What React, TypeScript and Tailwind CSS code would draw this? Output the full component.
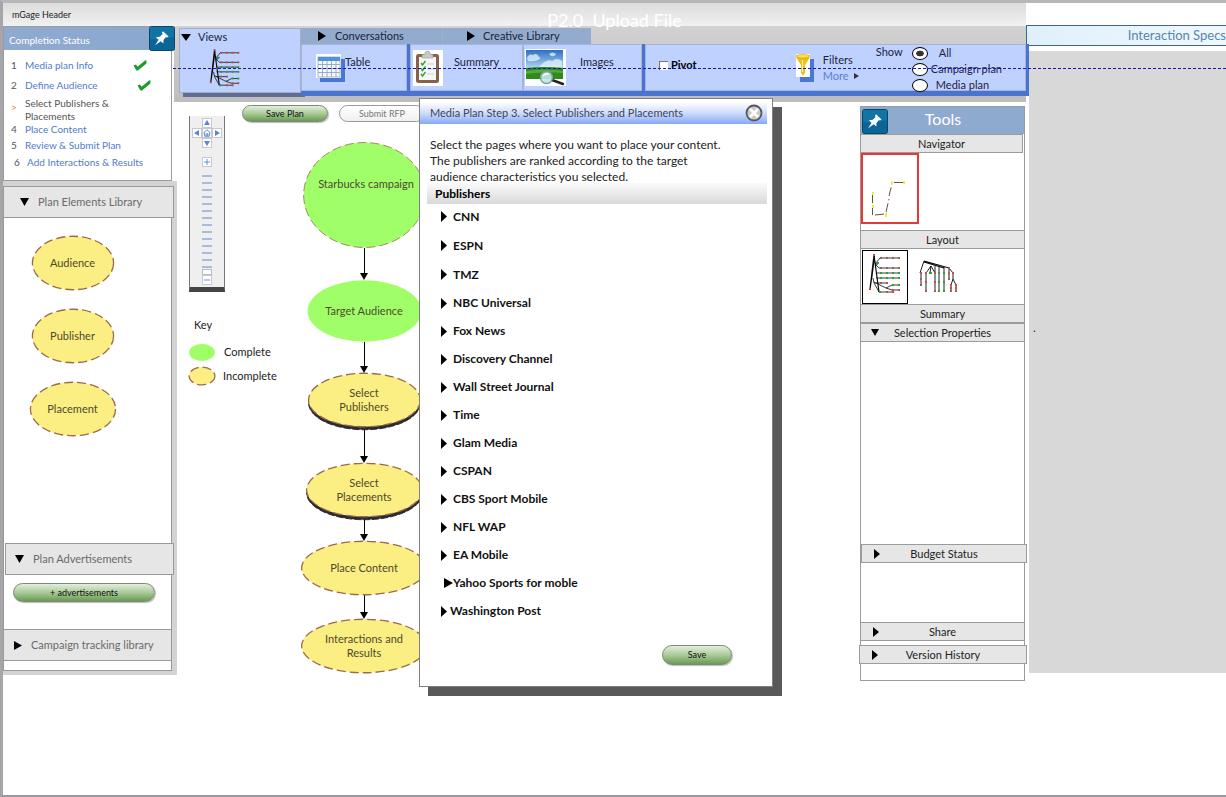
import type { ReactNode } from "react";

const publishers = [
  "CNN",
  "ESPN",
  "TMZ",
  "NBC Universal",
  "Fox News",
  "Discovery Channel",
  "Wall Street Journal",
  "Time",
  "Glam Media",
  "CSPAN",
  "CBS Sport Mobile",
  "NFL WAP",
  "EA Mobile",
  "Yahoo Sports for moble",
  "Washington Post",
];

const steps = [
  { mark: "1", label: "Media plan Info", state: "done" },
  { mark: "2", label: "Define Audience", state: "done" },
  { mark: ">", label: "Select Publishers & Placements", state: "current" },
  { mark: "4", label: "Place Content", state: "open" },
  { mark: "5", label: "Review & Submit Plan", state: "open" },
  { mark: "6", label: "Add Interactions & Results", state: "open" },
];

function Right({ className = "h-3 w-2" }: { className?: string }) {
  return (
    <svg viewBox="0 0 8 12" preserveAspectRatio="none" className={`${className} shrink-0`} aria-hidden="true">
      <path d="M0 0L8 6L0 12Z" fill="#000" />
    </svg>
  );
}

function Down({ className = "h-2 w-2" }: { className?: string }) {
  return (
    <svg viewBox="0 0 10 8" preserveAspectRatio="none" className={`${className} shrink-0`} aria-hidden="true">
      <path d="M0 0H10L5 8Z" fill="#000" />
    </svg>
  );
}

function Pin() {
  return (
    <svg viewBox="0 0 26 25" className="h-[25px] w-[26px]" aria-hidden="true">
      <rect x="0.5" y="0.5" width="25" height="24" rx="2" fill="#0b6596" stroke="#08466b" />
      <path d="M1 1H25V11Q12 15 1 13Z" fill="#1273a5" />
      <path d="M14 5.2L19.6 10.6L17.9 11.5L16.9 11.1L14.5 14.1L14.4 17.6L11.7 15.3L6.2 19.2L9.5 13.7L6.8 11.2L10.7 10.8L13.5 8.3L13 6.7Z" fill="#fff" />
    </svg>
  );
}

function Check() {
  return (
    <svg viewBox="0 0 14 11" className="h-[11px] w-[14px] shrink-0" aria-hidden="true">
      <path d="M0.5 5.5L3 4.5L4.6 6.8L12 0.5L13.5 0.3L13.4 3.5L5 10.5L3.4 10.6Z" fill="#1f9a2b" />
    </svg>
  );
}

function TreeAcross({ className }: { className: string }) {
  const rows = [
    [4, 12, 31],
    [14, 11, 31],
    [19, 8, 31],
    [24, 8, 31],
    [29, 7, 20],
  ];
  return (
    <svg viewBox="0 0 34 42" className={className} aria-hidden="true">
      <g stroke="#0a0a0a" strokeWidth="0.8" fill="none">
        <path d="M6 1L2 35M6.500 2L4 22L2 35M6 1L11 38" strokeWidth="1.200" />
        <path d="M7 10L12 4M7 10L11 14M7 10L11 9L7 12M5 24L6 29L11 38M6 28L18 34L24 31M18 34L24 36" />
        {rows.map(([y, a, b]) => (
          <path key={y} d={`M${a} ${y}H${b}`} />
        ))}
        <path d="M24 31H31M24 36H31M11 38H25" />
      </g>
      {rows.map(([y, , b], i) => (
        <g key={y} fill={i === 2 || i === 3 ? "#21a53a" : "#b0564c"}>
          <rect x="12" y={y - 1} width="2" height="2" />
          <rect x="18" y={y - 1} width="2" height="2" />
          {b > 24 && <rect x="24" y={y - 1} width="2" height="2" />}
          {b > 24 && <rect x="30" y={y - 1} width="2" height="2" />}
        </g>
      ))}
      <rect x="8" y="8" width="3" height="2" fill="#2ca04a" />
      <path d="M5 0h2v2h-2zM1 34h2v2h-2zM24 35h2v2h-2zM30 35h2v2h-2zM18 37h2v2h-2zM24 37h2v2h-2z" fill="#b0564c" />
      <path d="M24 30h2v2h-2zM30 30h2v2h-2zM11 37h2v2h-2z" fill="#21a53a" />
    </svg>
  );
}

function TreeDown() {
  const columns = [
    [3, 13, 25],
    [8, 13, 31],
    [17, 13, 31],
    [21, 13, 31],
    [26, 13, 31],
    [31, 8, 19],
    [33, 25, 31],
    [38, 25, 31],
  ];
  return (
    <svg viewBox="0 0 40 33" className="h-[33px] w-[40px]" aria-hidden="true">
      <g stroke="#0a0a0a" strokeWidth="0.9" fill="none">
        <path d="M6 1L31 8M6 2L26 8" strokeWidth="1.200" />
        <path d="M6 1L2 13M13 6L8 13M13 6L12 13M13 6L17 13M17 6V13M21 7V13M26 7V13M31 8L35 13V19L33 25M35 19L38 25" />
        {columns.map(([x, a, b]) => (
          <path key={x} d={`M${x} ${a}V${b}`} />
        ))}
      </g>
      {columns.map(([x, a, b], i) => (
        <g key={x} fill={i > 2 && i < 5 ? "#21a53a" : "#b0564c"}>
          <rect x={x - 1} y={a - 1} width="2" height="2" />
          <rect x={x - 1} y={(a + b) / 2 - 1} width="2" height="2" />
          <rect x={x - 1} y={b - 1} width="2" height="2" />
        </g>
      ))}
      <rect x="11" y="12" width="3" height="2" fill="#21a53a" />
      <rect x="34" y="12" width="2" height="2" fill="#b0564c" />
    </svg>
  );
}

function TableIcon() {
  return (
    <svg viewBox="0 0 29 28" className="h-[28px] w-[29px]" aria-hidden="true">
      <rect x="4" y="5" width="25" height="23" fill="#4a77d4" />
      <rect width="25" height="24" fill="#fff" />
      <rect x="2" y="3" width="22" height="20" fill="#f4f8fd" stroke="#8299b8" strokeWidth="0.7" />
      <rect x="2" y="3" width="22" height="4" fill="#4f93dc" />
      <path d="M2 10.5H24M2 14.5H24M2 18.5H24M6.5 7V23M11 7V23M15.5 7V23M20 7V23" stroke="#93a7c0" strokeWidth="0.9" />
    </svg>
  );
}

function ClipboardIcon() {
  return (
    <svg viewBox="0 0 30 36" className="h-[36px] w-[30px]" aria-hidden="true">
      <rect width="30" height="36" fill="#fff" />
      <rect x="3" y="4" width="23" height="29" rx="2.5" fill="#85634a" />
      <rect x="6" y="7" width="17" height="23" fill="#f6f6f4" />
      <path d="M9 8V5L12 4Q12 1 14.5 1Q17 1 17 4L20 5V8Z" fill="#c9c9cb" stroke="#9a9a9c" strokeWidth="0.6" />
      <path d="M14 14H21M14 19H21M14 24H21" stroke="#cfcfcf" />
      <path d="M8 13L9.5 15L12.5 11M8 18.500L9.500 20.500L12.500 16.500M8 24L9.500 26L12.500 22" stroke="#2ea52e" strokeWidth="1.4" fill="none" />
    </svg>
  );
}

function PictureIcon() {
  return (
    <svg viewBox="0 0 41 37" className="h-[37px] w-[41px]" aria-hidden="true">
      <defs>
        <linearGradient id="sky" x1="0" y1="0" x2="0" y2="1">
          <stop offset="0" stopColor="#2c6fc4" />
          <stop offset="1" stopColor="#b5dcf2" />
        </linearGradient>
      </defs>
      <rect width="41" height="37" fill="#fff" />
      <rect x="1" y="1" width="37" height="19" fill="url(#sky)" />
      <path d="M2 9Q4 4 8 6Q12 3 14 8Q17 9 13 11Q8 13 3 12ZM24 5Q28 2 31 5Q30 8 26 7ZM18 14Q23 10 27 12Q32 8 37 12V18H14Z" fill="#e6f3fb" opacity="0.75" />
      <path d="M1 19Q18 17 38 19V30H1Z" fill="#2f8a1f" />
      <path d="M1 22Q20 19 38 22V24Q20 22 1 25Z" fill="#57ab34" />
      <path d="M27 31L38 35" stroke="#222" strokeWidth="2.4" strokeLinecap="round" />
      <circle cx="21.500" cy="28.500" r="6" fill="#c3e6ea" fillOpacity="0.9" stroke="#7d9aa0" strokeWidth="1.400" />
      <path d="M18 27Q20 24 24 25" stroke="#fff" strokeWidth="1.5" fill="none" />
    </svg>
  );
}

function FunnelIcon() {
  return (
    <svg viewBox="0 0 18 28" className="h-[28px] w-[18px]" aria-hidden="true">
      <rect x="4" y="5" width="14" height="23" fill="#4a77d4" />
      <rect width="14" height="23" fill="#fff" />
      <path d="M0.500 1H13.500V4L9 11V19L7 21.500L5 19V11L0.500 4Z" fill="#f0bd12" />
      <ellipse cx="7" cy="2.200" rx="6.500" ry="1.800" fill="#ffe04a" stroke="#c29208" strokeWidth="0.5" />
      <path d="M6.500 6V18" stroke="#fff2a0" strokeWidth="1.2" />
    </svg>
  );
}

function Oval({
  size,
  complete = false,
  dashed = true,
  raised = false,
  lift = "",
  children,
}: {
  size: string;
  complete?: boolean;
  dashed?: boolean;
  raised?: boolean;
  lift?: string;
  children?: ReactNode;
}) {
  return (
    <div className={`relative flex shrink-0 items-center justify-center ${size}`}>
      <svg className="absolute inset-0 h-full w-full overflow-visible" aria-hidden="true">
        {raised && (
          <ellipse cx="50%" cy="50%" rx="49.5%" ry="49.5%" fill="#2c2a30" stroke="#2c2a30" strokeDasharray="7 2" className="translate-y-[3px]" />
        )}
        <ellipse
          cx="50%"
          cy="50%"
          rx="49.5%"
          ry="49.500%"
          fill={complete ? "#a0ff68" : "#fbee82"}
          stroke={dashed ? "#9b6a4c" : "none"}
          strokeWidth={complete ? 0.8 : 1.3}
          strokeDasharray="9 4"
        />
      </svg>
      <span className={`relative text-center text-[11px] leading-[14px] whitespace-pre-line text-[#4d4a30] ${lift}`}>{children}</span>
    </div>
  );
}

function Arrow({ size }: { size: string }) {
  return (
    <div className={`flex w-2 shrink-0 flex-col items-center ${size}`}>
      <div className="w-px flex-1 bg-black" />
      <Down className="h-[7px] w-2" />
    </div>
  );
}

function ToolBar({ children, arrow, className = "" }: { children: ReactNode; arrow?: "right" | "down"; className?: string }) {
  return (
    <button
      type="button"
      className={`grid h-[19px] shrink-0 grid-cols-[24px_1fr_24px] items-center border border-[#9b9b9b] bg-[#e6e6e6] text-[11px] leading-[16px] text-[#222] ${className}`}
    >
      <span className="flex justify-end pr-[6px]">
        {arrow === "right" && <Right className="h-[10px] w-[6px]" />}
        {arrow === "down" && <Down className="h-[7px] w-[8px]" />}
      </span>
      <span className="text-center">{children}</span>
    </button>
  );
}

const pill =
  "flex items-center justify-center rounded-full border border-[#7d8a78] bg-linear-to-b from-[#e3efdc] via-[#a9cb98] to-[#6b9b52] text-[9px] leading-3 text-[#111] shadow-[1px_1px_1px_#bbb]";

const padKey = "flex h-[10px] w-[10px] items-center justify-center border border-[#c4c8d0] bg-white text-[#5b84d6]";

function PadArrow({ d }: { d: string }) {
  return (
    <svg viewBox="0 0 6 6" className="h-[6px] w-[6px] shrink-0" aria-hidden="true">
      <path d={d} fill="currentColor" />
    </svg>
  );
}

function CompletionStatus() {
  return (
    <section className="relative z-20 mr-[5px] h-[155px] border border-[#9c9c9c] bg-white">
      <header className="-mr-[4px] flex h-[23px] items-center justify-between bg-linear-to-r from-[#8faacf] to-[#8aa8cf]">
        <h2 className="pt-1 pl-[5px] text-[10px] text-white">Completion Status</h2>
        <button type="button" aria-label="Pin completion status">
          <Pin />
        </button>
      </header>
      <ol className="flex flex-col pt-[9px] text-[10px] leading-[13px]">
        {steps.map((step, i) => (
          <li key={step.label} className={`flex ${["h-5", "h-[18px]", "h-[26px]", "h-[16px]", "h-[17px]", "h-4"][i]} items-center`}>
            <span className={`w-[21px] shrink-0 self-start ${i === 5 ? "pl-[10px]" : "pl-[7px]"} ${step.state === "current" ? "pt-1 text-[#ef7a35]" : "text-[#555]"}`}>
              {step.mark}
            </span>
            {step.state === "current" ? (
              <span className="w-[100px] text-[#555]">{step.label}</span>
            ) : (
              <a href="#step" className={`self-start whitespace-nowrap text-[#4f7bcb] ${i === 5 ? "pl-[2px]" : ""}`}>
                {step.label}
              </a>
            )}
            {step.state === "done" && (
              <span className={`ml-auto self-start pt-px ${i === 0 ? "pr-6" : "pr-5"}`}>
                <Check />
              </span>
            )}
          </li>
        ))}
      </ol>
    </section>
  );
}

function LibraryHeading({ children, open = false, className = "" }: { children: ReactNode; open?: boolean; className?: string }) {
  return (
    <button
      type="button"
      className={`flex h-8 shrink-0 items-center gap-[9px] border border-[#999] bg-[#e6e6e6] text-[11px] text-[#6a6a6a] ${className}`}
    >
      {open ? <Down className="h-2 w-[9px]" /> : <Right className="h-[9px] w-2" />}
      {children}
    </button>
  );
}

function Library() {
  return (
    <section className="bg-[#d3d3d3] pt-[5px] pr-[5px] pb-[4px]">
      <div className="flex h-[485px] flex-col border border-[#999] bg-white">
        <LibraryHeading open className="-mt-px -mr-[3px] -ml-px pl-4">
          Plan Elements Library
        </LibraryHeading>
        <div className="flex flex-1 flex-col items-center gap-[19px] pt-[18px] pr-[30px]">
          <Oval size="h-[54px] w-[82px]">Audience</Oval>
          <Oval size="h-[54px] w-[82px]">Publisher</Oval>
          <Oval size="h-[54px] w-[86px]">Placement</Oval>
        </div>
        <LibraryHeading open className="-mr-[3px] ml-px pl-[9px]">
          Plan Advertisements
        </LibraryHeading>
        <div className="h-[54px] shrink-0 pt-2 pr-4 pl-[9px]">
          <button type="button" className={`${pill} h-[19px] w-full`}>
            + advertisements
          </button>
        </div>
        <LibraryHeading className="-mx-px pl-[10px]">Campaign tracking library</LibraryHeading>
        <div className="h-[9px] shrink-0" />
      </div>
    </section>
  );
}

function Toolbar() {
  const radios = ["All", "Campaign plan", "Media plan"];
  return (
    <nav className="-ml-[3px] flex h-[76px] items-start bg-linear-to-b from-[#d2d2d2] to-[#bdbdbd] pt-[2px] pl-[5px] text-[11px] text-[#1c2340]">
      <section className="h-[65px] w-[122px] shrink-0 border border-[#a5aec2] bg-[#bfd1ff] shadow-[4px_4px_0_#5e6c96]">
        <button type="button" className="flex h-4 items-center gap-[7px] pl-px">
          <Down className="h-[7px] w-[10px]" />
          Views
        </button>
        <div className="pt-[4px] pl-7">
          <TreeAcross className="h-[40px] w-[34px]" />
        </div>
      </section>
      <div className="relative -mr-[3px] flex-1">
        <div className="flex h-4 w-[290px] bg-[#93accd]">
          <button type="button" className="flex flex-1 items-center gap-[9px] border-r border-[#9db2cf] pl-[17px]">
            <Right className="h-[10px] w-2" />
            Conversations
          </button>
          <button type="button" className="flex flex-1 items-center gap-[8px] pl-[24px]">
            <Right className="h-[10px] w-2" />
            Creative Library
          </button>
        </div>
        <div className="flex h-[52px] bg-[#4a74cf] pr-[3px] pb-[5px] whitespace-nowrap">
          <button type="button" className="mr-[3px] flex w-[106px] items-center border border-[#a5b4d8] bg-[#bfd1ff] pl-[14px]">
            <TableIcon />
            <span className="pb-[10px]">Table</span>
          </button>
          <button type="button" className="flex w-[113px] items-center gap-[11px] border border-[#a5b4d8] bg-[#bfd1ff] pl-[2px]">
            <ClipboardIcon />
            <span className="pb-[10px]">Summary</span>
          </button>
          <button type="button" className="mr-[3px] flex w-[119px] items-center gap-[14px] border border-[#a5b4d8] bg-[#bfd1ff] pl-px">
            <PictureIcon />
            <span className="pb-[10px]">Images</span>
          </button>
          <div className="flex flex-1 items-center justify-between border border-[#a5b4d8] bg-[#bfd1ff] pr-[23px] pl-[13px]">
            <label className="flex items-center gap-[3px] pb-1 font-bold text-black">
              <input type="checkbox" className="h-[9px] w-[9px] appearance-none border-t border-l border-[#777] bg-white checked:bg-[#335]" />
              Pivot
            </label>
            <div className="flex items-center">
              <div className="flex items-center gap-[9px]">
                <FunnelIcon />
                <div className="flex w-[53px] flex-col leading-[16px]">
                  <span>Filters</span>
                  <a href="#filters" className="flex items-center gap-[5px] text-[#5a80d4]">
                    More
                    <svg viewBox="0 0 5 6" className="h-[6px] w-[5px]" aria-hidden="true">
                      <path d="M0 0L5 3L0 6Z" fill="#334" />
                    </svg>
                  </a>
                </div>
              </div>
              <fieldset className="flex items-start pt-[3px]">
                <legend className="float-left w-[36px] leading-[14px]">Show</legend>
                <div className="flex flex-col">
                  {radios.map((name, i) => (
                    <label key={name} className="flex h-4 items-center">
                      <input
                        type="radio"
                        name="show"
                        defaultChecked={i === 0}
                        className="h-[13px] w-4 appearance-none rounded-[50%] border border-black bg-white checked:bg-radial checked:from-[#333] checked:from-35% checked:to-white checked:to-40%"
                      />
                      <span className={["pl-[11px]", "pl-[3px]", "pl-[8px]"][i]}>{name}</span>
                    </label>
                  ))}
                </div>
              </fieldset>
            </div>
          </div>
        </div>
      </div>
    </nav>
  );
}

function ZoomControl() {
  return (
    <div className="flex w-[36px] flex-col items-center border-x border-b-[5px] border-x-[#777] border-b-[#444] bg-[#efefef] pb-[2px]">
      <div className="grid grid-cols-3 pt-[2px]">
        <span />
        <button type="button" aria-label="Pan up" className={padKey}>
          <PadArrow d="M0 5L3 0L6 5Z" />
        </button>
        <span />
        <button type="button" aria-label="Pan left" className={padKey}>
          <PadArrow d="M5 0L0 3L5 6Z" />
        </button>
        <button type="button" aria-label="Reset view" className={padKey}>
          <svg viewBox="0 0 10 10" className="h-2 w-2 shrink-0" aria-hidden="true">
            <path d="M0.500 5L5 1L9.500 5M2 4.500V9H8V4.500M4 9V6H6V9" fill="none" stroke="currentColor" strokeWidth="1.200" />
          </svg>
        </button>
        <button type="button" aria-label="Pan right" className={padKey}>
          <PadArrow d="M1 0L6 3L1 6Z" />
        </button>
        <span />
        <button type="button" aria-label="Pan down" className={padKey}>
          <PadArrow d="M0 1L3 6L6 1Z" />
        </button>
      </div>
      <button type="button" aria-label="Zoom in" className={`${padKey} mt-[9px]`}>
        <svg viewBox="0 0 8 8" className="h-[6px] w-[6px]" aria-hidden="true">
          <path d="M4 0V8M0 4H8" stroke="currentColor" strokeWidth="1.200" />
        </svg>
      </button>
      <input
        type="range"
        aria-label="Zoom level"
        defaultValue={0}
        className="mt-[3px] h-[105px] w-[10px] appearance-none bg-[repeating-linear-gradient(to_bottom,transparent_0px,transparent_5px,#a9bcdc_5px,#a9bcdc_7px)] [direction:rtl] [writing-mode:vertical-lr] [&::-webkit-slider-thumb]:h-[6px] [&::-webkit-slider-thumb]:w-[10px] [&::-webkit-slider-thumb]:appearance-none [&::-webkit-slider-thumb]:border [&::-webkit-slider-thumb]:border-[#b9bdc6] [&::-webkit-slider-thumb]:bg-white"
      />
      <button type="button" aria-label="Zoom out" className={padKey}>
        <svg viewBox="0 0 8 8" className="h-[6px] w-[6px]" aria-hidden="true">
          <path d="M0 4H8" stroke="currentColor" strokeWidth="1.200" />
        </svg>
      </button>
    </div>
  );
}

function Canvas() {
  return (
    <div className="relative flex flex-1 items-start">
      <aside className="w-[112px] shrink-0 pt-[14px] pl-[12px] text-[11px] text-[#222]">
        <ZoomControl />
        <h3 className="pt-[24px] pb-[9px] pl-[5px] leading-[18px]">Key</h3>
        <ul className="flex flex-col gap-[6px] leading-[18px]">
          <li className="flex items-center gap-[9px]">
            <Oval complete dashed={false} size="h-[17px] w-[26px]" />
            Complete
          </li>
          <li className="flex items-center gap-[8px]">
            <Oval size="h-[18px] w-[26px]" />
            Incomplete
          </li>
        </ul>
      </aside>
      <main className="w-[270px] shrink-0 pt-[3px]">
        <div className="-ml-[47px] flex gap-[11px]">
          <button type="button" className={`${pill} h-[17px] w-[86px]`}>
            Save Plan
          </button>
          <button
            type="button"
            className="h-[17px] w-[86px] rounded-full border border-[#999] bg-linear-to-b from-white to-[#f0f0f0] text-[9px] leading-3 text-[#777]"
          >
            Submit RFP
          </button>
        </div>
        <div className="flex w-[150px] flex-col items-center pt-[20px]">
          <Oval complete size="h-[106px] w-[123px]" lift="pb-[22px] pl-[4px]">Starbucks campaign</Oval>
          <Arrow size="h-[32px]" />
          <Oval complete dashed={false} size="h-[62px] w-[115px]">Target Audience</Oval>
          <Arrow size="h-[31px]" />
          <Oval raised size="h-[54px] w-[113px]">{"Select\nPublishers"}</Oval>
          <Arrow size="h-[36px]" />
          <Oval raised size="h-[54px] w-[117px]">{"Select\nPlacements"}</Oval>
          <Arrow size="h-[24px]" />
          <Oval size="h-[54px] w-[126px]">Place Content</Oval>
          <Arrow size="h-[24px]" />
          <Oval size="h-[54px] w-[126px]">{"Interactions and\nResults"}</Oval>
        </div>
      </main>
      <PublisherDialog />
    </div>
  );
}

function PublisherDialog() {
  return (
    <div
      role="dialog"
      aria-labelledby="dialog-title"
      className="absolute -top-[4px] left-[242px] z-30 w-[354px] border border-[#808080] bg-white pt-[3px] pr-[5px] pb-[21px] shadow-[9px_9px_0_#595959]"
    >
      <header className="flex h-[22px] items-center justify-between bg-linear-to-b from-white via-[#cfdcfb] to-[#86a9f4] pr-1 pl-[10px]">
        <h2 id="dialog-title" className="text-[11px] text-[#3c4660]">
          Media Plan Step 3. Select Publishers and Placements
        </h2>
        <button type="button" aria-label="Close">
          <svg viewBox="0 0 18 18" className="h-[18px] w-[18px]" aria-hidden="true">
            <circle cx="9" cy="9" r="7.500" fill="#c9c9c9" stroke="#56585c" strokeWidth="1.800" />
            <path d="M5 5L13 13M13 5L5 13" stroke="#fff" strokeWidth="2.600" />
          </svg>
        </button>
      </header>
      <p className="pt-[13px] pl-[10px] text-[12px] leading-[16px] whitespace-pre-line text-[#222]">
        {"Select the pages where you want to place your content.\nThe publishers are ranked according to the target\naudience characteristics you selected."}
      </p>
      <h3 className="-mt-[2px] ml-[7px] flex h-[21px] items-center bg-linear-to-b from-[#fbfbfb] to-[#d9d9d9] pl-2 text-[12px] font-bold text-black">Publishers</h3>
      <ul className="-mt-[2px] pl-[21px] text-[12px] font-bold text-[#111]">
        {publishers.map((name, i) => (
          <li key={name} className="flex h-7 items-center nth-[-n+3]:h-[29px]">
            <button type="button" className={`flex items-center ${i === 13 ? "pl-[3px]" : i === 14 ? "gap-[3px]" : "gap-[6px]"}`}>
              <Right className={i === 13 ? "h-[10px] w-[9px]" : "h-[11px] w-[6px]"} />
              {name}
            </button>
          </li>
        ))}
      </ul>
      <div className="flex justify-end pt-[20px] pr-[35px]">
        <button type="button" className={`${pill} h-[20px] w-[70px]`}>
          Save
        </button>
      </div>
    </div>
  );
}

function Tools() {
  return (
    <section className="mt-[4px] mr-px flex h-[575px] w-[165px] shrink-0 flex-col border border-[#9b9b9b] bg-white">
      <header className="grid h-[27px] shrink-0 grid-cols-[26px_1fr_26px] items-center bg-[#8faacf] pl-px">
        <button type="button" aria-label="Pin tools">
          <Pin />
        </button>
        <h2 className="pb-1 text-center text-[16px] leading-6 text-white">Tools</h2>
      </header>
      <ToolBar className="-ml-px mr-[1px]">Navigator</ToolBar>
      <div className="h-[77px] shrink-0">
        <svg viewBox="0 0 58 71" className="h-[71px] w-[58px]" aria-hidden="true">
          <rect x="1" y="1" width="56" height="69" fill="#fff" stroke="#e53935" strokeWidth="2" />
          <path d="M11.500 41V62M14 62L24 61M25 59L28 46M28 43L31 31M33 29.500H42" stroke="#6b5040" fill="none" strokeDasharray="9 3" />
          <path d="M11 39h2v3h-2zM11 52h2v3h-2zM24 60h2v4h-2zM30 28h2v3h-2zM42 28h2v3h-2z" fill="#f6e74a" />
        </svg>
      </div>
      <ToolBar className="-mx-px">Layout</ToolBar>
      <div className="flex h-[55px] shrink-0 items-center gap-[10px] pl-px">
        <button type="button" aria-label="Horizontal tree" className="flex h-[54px] w-[46px] items-start justify-center border border-black">
          <TreeAcross className="h-[48px] w-[34px]" />
        </button>
        <button type="button" aria-label="Vertical tree">
          <TreeDown />
        </button>
      </div>
      <ToolBar className="-mx-px">Summary</ToolBar>
      <ToolBar arrow="down" className="-mx-px">
        Selection Properties
      </ToolBar>
      <div className="flex-1" />
      <ToolBar arrow="right" className="-mr-[3px]">
        Budget Status
      </ToolBar>
      <div className="h-[59px] shrink-0" />
      <ToolBar arrow="right" className="-mx-px">
        Share
      </ToolBar>
      <div className="h-[4px] shrink-0" />
      <ToolBar arrow="right" className="-mr-[3px] -ml-[2px]">
        Version History
      </ToolBar>
      <div className="h-4 shrink-0" />
    </section>
  );
}

export default function App() {
  return (
    <div className="relative flex min-h-screen overflow-hidden border-t-[3px] border-b-2 border-l-[3px] border-t-[#b7b7b9] border-b-[#9a9a9e] border-l-[#a5a5aa] bg-white font-[Lato,'Noto_Sans',sans-serif]">
      <div className="relative z-10 min-w-0 flex-1">
        <header className="flex h-[23px] items-center bg-linear-to-b from-[#dcdcdc] to-[#f1f1f1] pl-[9px]">
          <span className="text-[9px] text-[#222]">mGage Header</span>
        </header>
        <div className="flex items-start">
          <div className="w-[174px] shrink-0">
            <CompletionStatus />
            <Library />
          </div>
          <div className="min-w-0 flex-1">
            <Toolbar />
            <div className="flex items-start">
              <Canvas />
              <Tools />
            </div>
          </div>
        </div>
      </div>
      <aside className="w-[200px] shrink-0 pt-[22px]">
        <h2 className="flex h-[21px] items-center justify-end border border-r-0 border-[#3f678d] bg-linear-to-r from-[#dff0fb] to-[#f1f8fd] text-[13px] text-[#5586b4]">
          Interaction Specs
        </h2>
        <div className="mt-[5px] ml-[3px] h-[622px] bg-[#d8d8d8] pt-[268px] pl-[4px] text-[12px] text-[#333]">.</div>
      </aside>
      <h1 className="pointer-events-none absolute inset-x-0 top-[5px] z-20 text-center text-[18px] leading-6 whitespace-pre text-white">P2.0  Upload File</h1>
      <div className="pointer-events-none absolute top-[65px] right-0 left-[170px] z-20 border-t border-dashed border-[#1414b8]" />
    </div>
  );
}
